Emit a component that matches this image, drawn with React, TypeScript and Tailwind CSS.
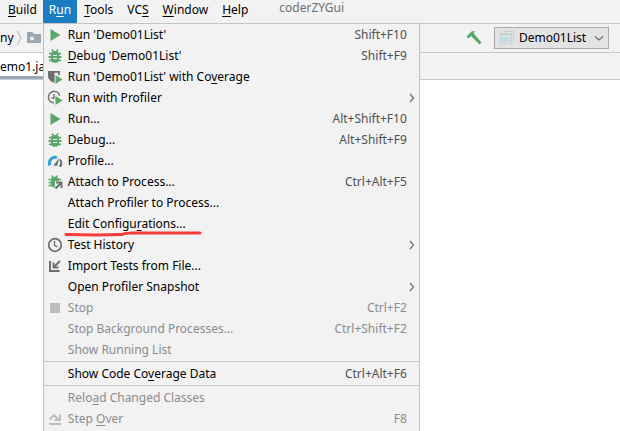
import type { ReactNode } from "react";

const PlayIcon = () => (
  <svg width="16" height="16" viewBox="0 0 16 16">
    <path d="M3.5 2 13.5 8 3.500 14z" fill="#59a869" />
  </svg>
);

const BugIcon = () => (
  <svg width="16" height="16" viewBox="0 0 16 16">
    <path d="M5 1.5 6.6 4h2.8L11 1.5" fill="none" stroke="#59a869" strokeWidth="1.6" />
    <path d="M2 5.6h12M1.500 9h13M2 12.4h12" stroke="#59a869" strokeWidth="1.8" />
    <rect x="4" y="3.200" width="8" height="11.500" rx="3.500" fill="#59a869" />
    <path d="M6 7.500h4M6 10.500h4" stroke="#f2f2f2" strokeWidth="1" />
  </svg>
);

const CoverageIcon = () => (
  <svg width="16" height="16" viewBox="0 0 16 16">
    <path d="M1 2h6.5v12C3.5 12.5 1 10 1 7z" fill="#6e6e6e" />
    <path d="M7 2.9h5V6" fill="none" stroke="#6e6e6e" strokeWidth="1.8" />
    <path d="M8.5 6 15.500 10.500l-7 4.500z" fill="#59a869" />
  </svg>
);

const ProfilerIcon = () => (
  <svg width="16" height="16" viewBox="0 0 16 16">
    <path d="M12.600 5.500A5.700 5.700 0 1 0 7 12.800" fill="none" stroke="#6e6e6e" strokeWidth="1.500" />
    <path d="M7 4v4H4.500" fill="none" stroke="#6e6e6e" strokeWidth="1.300" />
    <path d="M8.500 6 15.500 10.500l-7 4.500z" fill="#59a869" />
  </svg>
);

const GaugeIcon = () => (
  <svg width="16" height="16" viewBox="0 0 16 16">
    <path d="M2.500 12.500C1.500 7 5 3.500 10 4.500" fill="none" stroke="#389fd6" strokeWidth="3" />
    <path d="M6.500 12.500 12.500 4.500 10 13z" fill="#6e6e6e" />
    <path d="M13 6.500c1.600 2 1.600 4 1 6.300h-2" fill="none" stroke="#6e6e6e" strokeWidth="1.800" />
  </svg>
);

const AttachIcon = () => (
  <svg width="16" height="16" viewBox="0 0 16 16">
    <path d="M4.500 1.500 6 3.500h3L10.500 1.500" fill="none" stroke="#59a869" strokeWidth="1.400" />
    <path d="M1.500 5.500H14M1.500 8.500H7M1.500 11.500H7" stroke="#59a869" strokeWidth="1.500" />
    <path d="M4 6c0-4 8-4 8 0v1H8v6.500C5.500 13.500 4 12 4 10z" fill="#59a869" />
    <path d="M9 8.500h5.500V14M14 9 8.500 14.500" fill="none" stroke="#6e6e6e" strokeWidth="2" />
  </svg>
);

const ClockIcon = () => (
  <svg width="16" height="16" viewBox="0 0 16 16">
    <circle cx="8" cy="8" r="6.300" fill="none" stroke="#6e6e6e" strokeWidth="1.700" />
    <path d="M7.500 4v4.300l3 1.700" fill="none" stroke="#6e6e6e" strokeWidth="1.400" />
  </svg>
);

const ImportIcon = () => (
  <svg width="16" height="16" viewBox="0 0 16 16">
    <path d="M3 3v10h9.500" fill="none" stroke="#6e6e6e" strokeWidth="2" />
    <path d="M6.500 4.500v5h5M7 9l6-6" fill="none" stroke="#6e6e6e" strokeWidth="2" />
  </svg>
);

const StopIcon = () => (
  <svg width="16" height="16" viewBox="0 0 16 16">
    <rect x="3" y="3" width="10" height="10" fill="#bdbdbd" />
  </svg>
);

const StepOverIcon = () => (
  <svg width="16" height="16" viewBox="0 0 16 16">
    <path d="M2 13h12" stroke="#bdbdbd" strokeWidth="2" />
    <path d="M2.500 8.500 7 4l4.500 4.500M13 3.500V9H7.500" fill="none" stroke="#bdbdbd" strokeWidth="1.800" />
  </svg>
);

const HammerIcon = () => (
  <svg width="16" height="16" viewBox="0 0 16 16">
    <path d="M.5 6.500 5.500 1.500 9.500 1 7.500 3 9 5 15.500 12.500 13.500 14.500 6.500 7.500 5 6 2.500 8.500z" fill="#59a869" />
  </svg>
);

const FolderIcon = () => (
  <svg width="16" height="16" viewBox="0 0 16 16">
    <path d="M1 2h5.500L8 4h7v9H1z" fill="#9aa7b0" />
    <circle cx="6" cy="8.500" r="2" fill="#f2f2f2" />
  </svg>
);

const AppIcon = () => (
  <svg width="16" height="16" viewBox="0 0 16 16">
    <path d="M4 1.500h10.500V11" fill="none" stroke="#c6cdd2" strokeWidth="1" />
    <rect x="1.500" y="4" width="11" height="10" fill="#e3e3e3" stroke="#c6cdd2" />
    <path d="M1 4.500h12" stroke="#c6cdd2" strokeWidth="2" />
    <rect x="3" y="7" width="8" height="5" fill="#bcdde6" />
  </svg>
);

type Item = {
  label: ReactNode;
  icon?: ReactNode;
  keys?: string;
  sub?: boolean;
  disabled?: boolean;
  marked?: boolean;
};

const groups: Item[][] = [
  [
    { label: <>R<U>u</U>n 'Demo01List'</>, icon: <PlayIcon />, keys: "Shift+F10" },
    { label: <><U>D</U>ebug 'Demo01List'</>, icon: <BugIcon />, keys: "Shift+F9" },
    { label: <>Run 'Demo01List' with Co<U>v</U>erage</>, icon: <CoverageIcon /> },
    { label: "Run with Profiler", icon: <ProfilerIcon />, sub: true },
    { label: "Run...", icon: <PlayIcon />, keys: "Alt+Shift+F10" },
    { label: "Debug...", icon: <BugIcon />, keys: "Alt+Shift+F9" },
    { label: "Profile...", icon: <GaugeIcon /> },
    { label: "Attach to Process...", icon: <AttachIcon />, keys: "Ctrl+Alt+F5" },
    { label: "Attach Profiler to Process..." },
    { label: <>Edit Configu<U>r</U>ations...</>, marked: true },
    { label: "Test History", icon: <ClockIcon />, sub: true },
    { label: "Import Tests from File...", icon: <ImportIcon /> },
    { label: "Open Profiler Snapshot", sub: true },
    { label: "Stop", icon: <StopIcon />, keys: "Ctrl+F2", disabled: true },
    { label: "Stop Background Processes...", keys: "Ctrl+Shift+F2", disabled: true },
    { label: "Show Running List", disabled: true },
  ],
  [{ label: <>Show Code Co<U>v</U>erage Data</>, keys: "Ctrl+Alt+F6" }],
  [
    { label: <>Relo<U>a</U>d Changed Classes</>, disabled: true },
    { label: <>Step <U>O</U>ver</>, icon: <StepOverIcon />, keys: "F8", disabled: true },
  ],
];

// mnemonic letter
function U({ children }: { children: ReactNode }) {
  return <span className="underline underline-offset-2">{children}</span>;
}

const MenuItem = ({ item }: { item: Item }) => {
  return (
    <button
      role="menuitem"
      disabled={item.disabled}
      className="group relative flex h-[21px] w-full items-center pl-[3px] text-left whitespace-nowrap text-black disabled:text-[#8c8c8c]"
    >
      <span className="mr-[5px] w-4">{item.icon}</span>
      <span className="flex-1">{item.label}</span>
      {item.keys && (
        <span className="pr-3 text-[#505050] group-disabled:text-[#8c8c8c]">{item.keys}</span>
      )}
      {item.sub && (
        <svg className="mr-1" width="6" height="10" viewBox="0 0 6 10">
          <path d="M1 1l3.500 4L1 9" fill="none" stroke="#6e6e6e" strokeWidth="1.200" />
        </svg>
      )}
      {item.marked && (
        <svg className="absolute top-[17px] left-5" width="140" height="8" viewBox="0 0 140 8">
          <path
            d="M2 4.500c20 .5 40 .5 56 0 3-1.500 6-1.500 10-1.500h68"
            fill="none"
            stroke="#f93a3a"
            strokeWidth="3"
            strokeLinecap="round"
          />
        </svg>
      )}
    </button>
  );
};

const RunMenu = () => {
  return (
    <div role="menu" className="absolute top-full left-0 z-10 w-[377px] border border-[#c4c4c4] bg-[#f2f2f2] pb-1">
      {groups.map((items, i) => (
        <div key={i}>
          {i > 0 && <div role="separator" className="my-px h-px bg-[#c9c9c9]" />}
          {items.map((item, j) => (
            <MenuItem key={j} item={item} />
          ))}
        </div>
      ))}
    </div>
  );
};

export default function App() {
  return (
    <div className="flex h-screen flex-col overflow-hidden bg-white font-['Noto_Sans','Open_Sans',sans-serif] text-[12px] leading-4 text-black">
      <nav className="flex h-[23px] shrink-0 items-stretch bg-[#f2f2f2] whitespace-nowrap">
        <button className="pr-[6px] pl-2 pb-[3px]"><U>B</U>uild</button>
        <div className="relative flex">
          <button aria-haspopup="menu" aria-expanded="true" className="bg-[#1a7dc4] px-[6px] pb-[3px] text-white">
            R<U>u</U>n
          </button>
          <RunMenu />
        </div>
        <button className="px-[7px] pb-[3px]"><U>T</U>ools</button>
        <button className="px-[7px] pb-[3px]">VC<U>S</U></button>
        <button className="px-[7px] pb-[3px]"><U>W</U>indow</button>
        <button className="px-[7px] pb-[3px]"><U>H</U>elp</button>
        <span className="pl-6 text-[#6e6e6e]">coderZYGui</span>
      </nav>

      <div className="flex h-[30px] shrink-0 items-center border-y border-[#c9c9c9] bg-[#f2f2f2]">
        <span>ny</span>
        <svg className="ml-0.5 mr-1" width="6" height="16" viewBox="0 0 6 16">
          <path d="M1 1l4 7-4 7" fill="none" stroke="#b0b0b0" />
        </svg>
        <FolderIcon />
        <div className="ml-auto flex items-center pr-[11px]">
          <button aria-label="Build project" className="mr-3">
            <HammerIcon />
          </button>
          <div className="grid items-center">
            <select
              aria-label="Run configuration"
              className="col-start-1 row-start-1 h-[22px] w-[115px] appearance-none border border-[#a9a9a9] bg-[#e3e3e3] pl-6"
            >
              <option>Demo01List</option>
            </select>
            <div className="pointer-events-none col-start-1 row-start-1 flex justify-between px-[5px]">
              <AppIcon />
              <svg width="10" height="16" viewBox="0 0 10 16">
                <path d="M1 6.500l4 3.500 4-3.500" fill="none" stroke="#6e6e6e" strokeWidth="1.300" />
              </svg>
            </div>
          </div>
        </div>
      </div>

      <div className="flex h-[27px] shrink-0 border-b border-[#c9c9c9] bg-[#f2f2f2]">
        <button className="border-b-3 border-[#9aa7b8] bg-white pt-1 pr-4 text-left">emo1.java</button>
      </div>
      <main className="flex-1 bg-white"></main>
    </div>
  );
}
